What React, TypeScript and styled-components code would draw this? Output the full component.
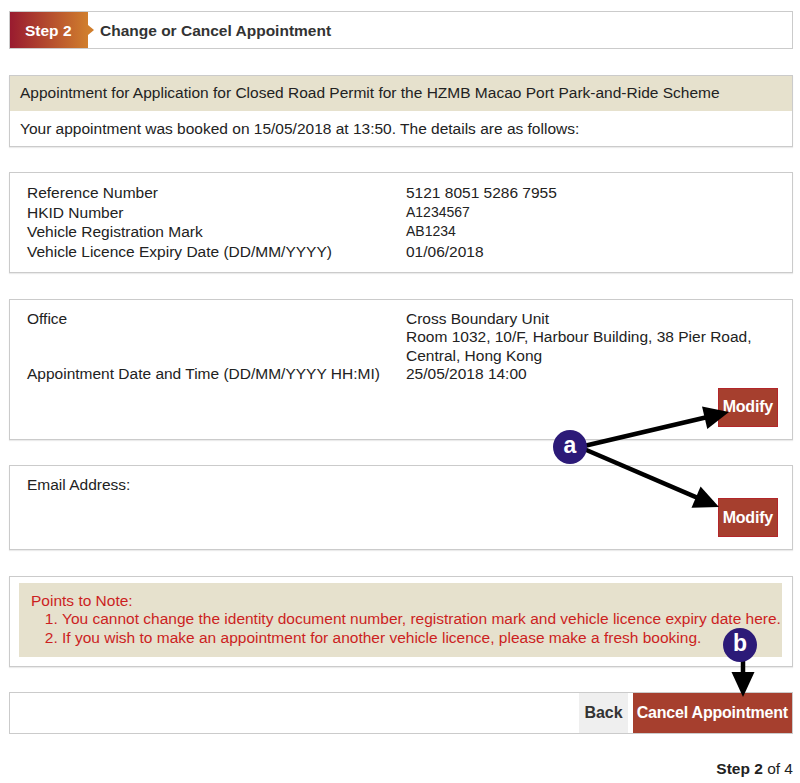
import React from "react"
import styled, { createGlobalStyle } from "styled-components"

const GlobalStyle = createGlobalStyle`
  body {
    margin: 0;
    background: #fff;
    font-family: "Liberation Sans", Arial, Helvetica, sans-serif;
    font-size: 15.5px;
    color: #222;
  }
`

const Page = styled.div`
  position: relative;
  width: 800px;
  height: 783px;
  box-sizing: border-box;
  padding: 11px 7px 0 9px;
  overflow: hidden;`

const Stack = styled.div`
  display: flex;
  flex-direction: column;
  gap: 25.5px;`

const Panel = styled.section<{ $pad?: string }>`
  border: 1px solid #cbcbcb;
  box-shadow: 0 1px 1px rgba(0, 0, 0, 0.08);
  padding: ${p => p.$pad || "0"};`

const StepHeader = styled.div`
  display: flex;
  height: 36px;
  border: 1px solid #cbcbcb;`

const StepBadge = styled.div`
  position: relative;
  width: 78px;
  box-sizing: border-box;
  padding: 1px 0 0 15px;
  display: flex;
  align-items: center;
  background: linear-gradient(90deg, #991b2f, #d07e2d);
  color: #fff;
  font-weight: bold;
  &::after {
    content: "";
    position: absolute;
    right: -6px;
    top: 50%;
    margin-top: -5px;
    border-left: 6px solid #d07e2d;
    border-top: 5px solid transparent;
    border-bottom: 5px solid transparent;
  }`

const StepTitle = styled.div`
  display: flex;
  align-items: center;
  padding: 1px 0 0 12px;
  font-weight: bold;
  color: #333;`

const TitleBar = styled.div`
  height: 35px;
  line-height: 33px;
  padding: 0 10px;
  background: #e6e1cd;`

const PlainRow = styled.div`
  height: 35px;
  line-height: 35px;
  padding: 0 10px;`

const DataGrid = styled.div<{ $lh: number }>`
  display: grid;
  grid-template-columns: 379px 1fr;
  line-height: ${p => p.$lh}px;`

const Value = styled.div<{ $small?: boolean }>`
  font-size: ${p => (p.$small ? "14px" : "15.5px")};`

const ActionRow = styled.div<{ $top: number }>`
  display: flex;
  justify-content: flex-end;
  margin-top: ${p => p.$top}px;`

const RedButton = styled.button<{ $pad?: number; $flat?: boolean }>`
  height: ${p => (p.$flat ? 40 : 39)}px;
  padding: 0 ${p => p.$pad ?? 4}px;
  border: ${p => (p.$flat ? "none" : "1px solid #b3262a")};
  background: #a63f2e;
  color: #fff;
  font-family: inherit;
  font-size: 16px;
  font-weight: bold;
  letter-spacing: -0.2px;
  cursor: pointer;`

const GreyButton = styled.button`
  height: 40px;
  padding: 0 5px;
  border: none;
  background: #efefef;
  color: #333;
  font-family: inherit;
  font-size: 16px;
  font-weight: bold;
  cursor: pointer;`

const Note = styled.div`
  background: #e6e1cd;
  color: #cc1f1f;
  padding: 9px 0 9.5px 12px;
  line-height: 18.5px;
  white-space: nowrap;`

const NoteList = styled.ol`
  margin: 0;
  padding-left: 31px;`

const BottomBar = styled.div`
  display: flex;
  justify-content: flex-end;
  gap: 5px;
  height: 40px;
  border: 1px solid #cbcbcb;`

const StepCount = styled.div`
  text-align: right;
  line-height: 18px;
  color: #222;`

const Overlay = styled.svg`
  position: absolute;
  left: 0;
  top: 0;
  pointer-events: none;`

const Marker = styled.div<{ $x: number; $y: number }>`
  position: absolute;
  left: ${p => p.$x - 17}px;
  top: ${p => p.$y - 17}px;
  width: 34px;
  height: 34px;
  border-radius: 50%;
  background: #2c1a78;
  color: #fff;
  font-weight: bold;
  font-size: 23px;
  line-height: 31px;
  text-align: center;`

function Arrow({ x1, y1, x2, y2 }: { x1: number; y1: number; x2: number; y2: number }) {
  const len = Math.hypot(x2 - x1, y2 - y1)
  const ux = (x2 - x1) / len
  const uy = (y2 - y1) / len
  const hl = 25
  const hw = 11.5
  const bx = x2 - ux * hl
  const by = y2 - uy * hl
  const px = -uy
  const py = ux
  return (
    <g>
      <line x1={x1} y1={y1} x2={bx + ux * 3} y2={by + uy * 3} stroke="#000" strokeWidth={4.5} />
      <polygon
        points={`${x2},${y2} ${bx + px * hw},${by + py * hw} ${bx - px * hw},${by - py * hw}`}
        fill="#000"
      />
    </g>
  )
}

function App() {
  return (
    <React.Fragment>
      <GlobalStyle />
      <Page>
        <Stack>
          <StepHeader>
            <StepBadge>Step 2</StepBadge>
            <StepTitle>Change or Cancel Appointment</StepTitle>
          </StepHeader>

          <Panel>
            <TitleBar>Appointment for Application for Closed Road Permit for the HZMB Macao Port Park-and-Ride Scheme</TitleBar>
            <PlainRow>Your appointment was booked on 15/05/2018 at 13:50. The details are as follows:</PlainRow>
          </Panel>

          <Panel $pad="10px 14px 11px 17px">
            <DataGrid $lh={19.5}>
              <div>Reference Number</div>
              <Value>5121 8051 5286 7955</Value>
              <div>HKID Number</div>
              <Value $small>A1234567</Value>
              <div>Vehicle Registration Mark</div>
              <Value $small>AB1234</Value>
              <div>Vehicle Licence Expiry Date (DD/MM/YYYY)</div>
              <Value>01/06/2018</Value>
            </DataGrid>
          </Panel>

          <Panel $pad="10px 14px 12px 17px">
            <DataGrid $lh={18.5}>
              <div>Office</div>
              <Value>
                Cross Boundary Unit<br />
                Room 1032, 10/F, Harbour Building, 38 Pier Road,<br />
                Central, Hong Kong
              </Value>
              <div>Appointment Date and Time (DD/MM/YYYY HH:MI)</div>
              <Value>25/05/2018 14:00</Value>
            </DataGrid>
            <ActionRow $top={4}>
              <RedButton>Modify</RedButton>
            </ActionRow>
          </Panel>

          <Panel $pad="10px 14px 12px 17px">
            <DataGrid $lh={18.5}>
              <div>Email Address:</div>
              <Value></Value>
            </DataGrid>
            <ActionRow $top={3.5}>
              <RedButton>Modify</RedButton>
            </ActionRow>
          </Panel>

          <Panel $pad="6px 10px 9px 9px">
            <Note>
              Points to Note:
              <NoteList>
                <li>You cannot change the identity document number, registration mark and vehicle licence expiry date here.</li>
                <li>If you wish to make an appointment for another vehicle licence, please make a fresh booking.</li>
              </NoteList>
            </Note>
          </Panel>

          <BottomBar>
            <GreyButton>Back</GreyButton>
            <RedButton $flat $pad={4}>Cancel Appointment</RedButton>
          </BottomBar>

          <StepCount>
            <b>Step 2</b> of 4
          </StepCount>
        </Stack>

        <Overlay width={800} height={783} viewBox="0 0 800 783">
          <Arrow x1={584} y1={446} x2={729} y2={412} />
          <Arrow x1={584} y1={449} x2={719} y2={507} />
          <Arrow x1={743} y1={660} x2={743} y2={697} />
        </Overlay>
        <Marker $x={570} $y={447}>a</Marker>
        <Marker $x={740} $y={645}>b</Marker>
      </Page>
    </React.Fragment>
  )
}

export default App
